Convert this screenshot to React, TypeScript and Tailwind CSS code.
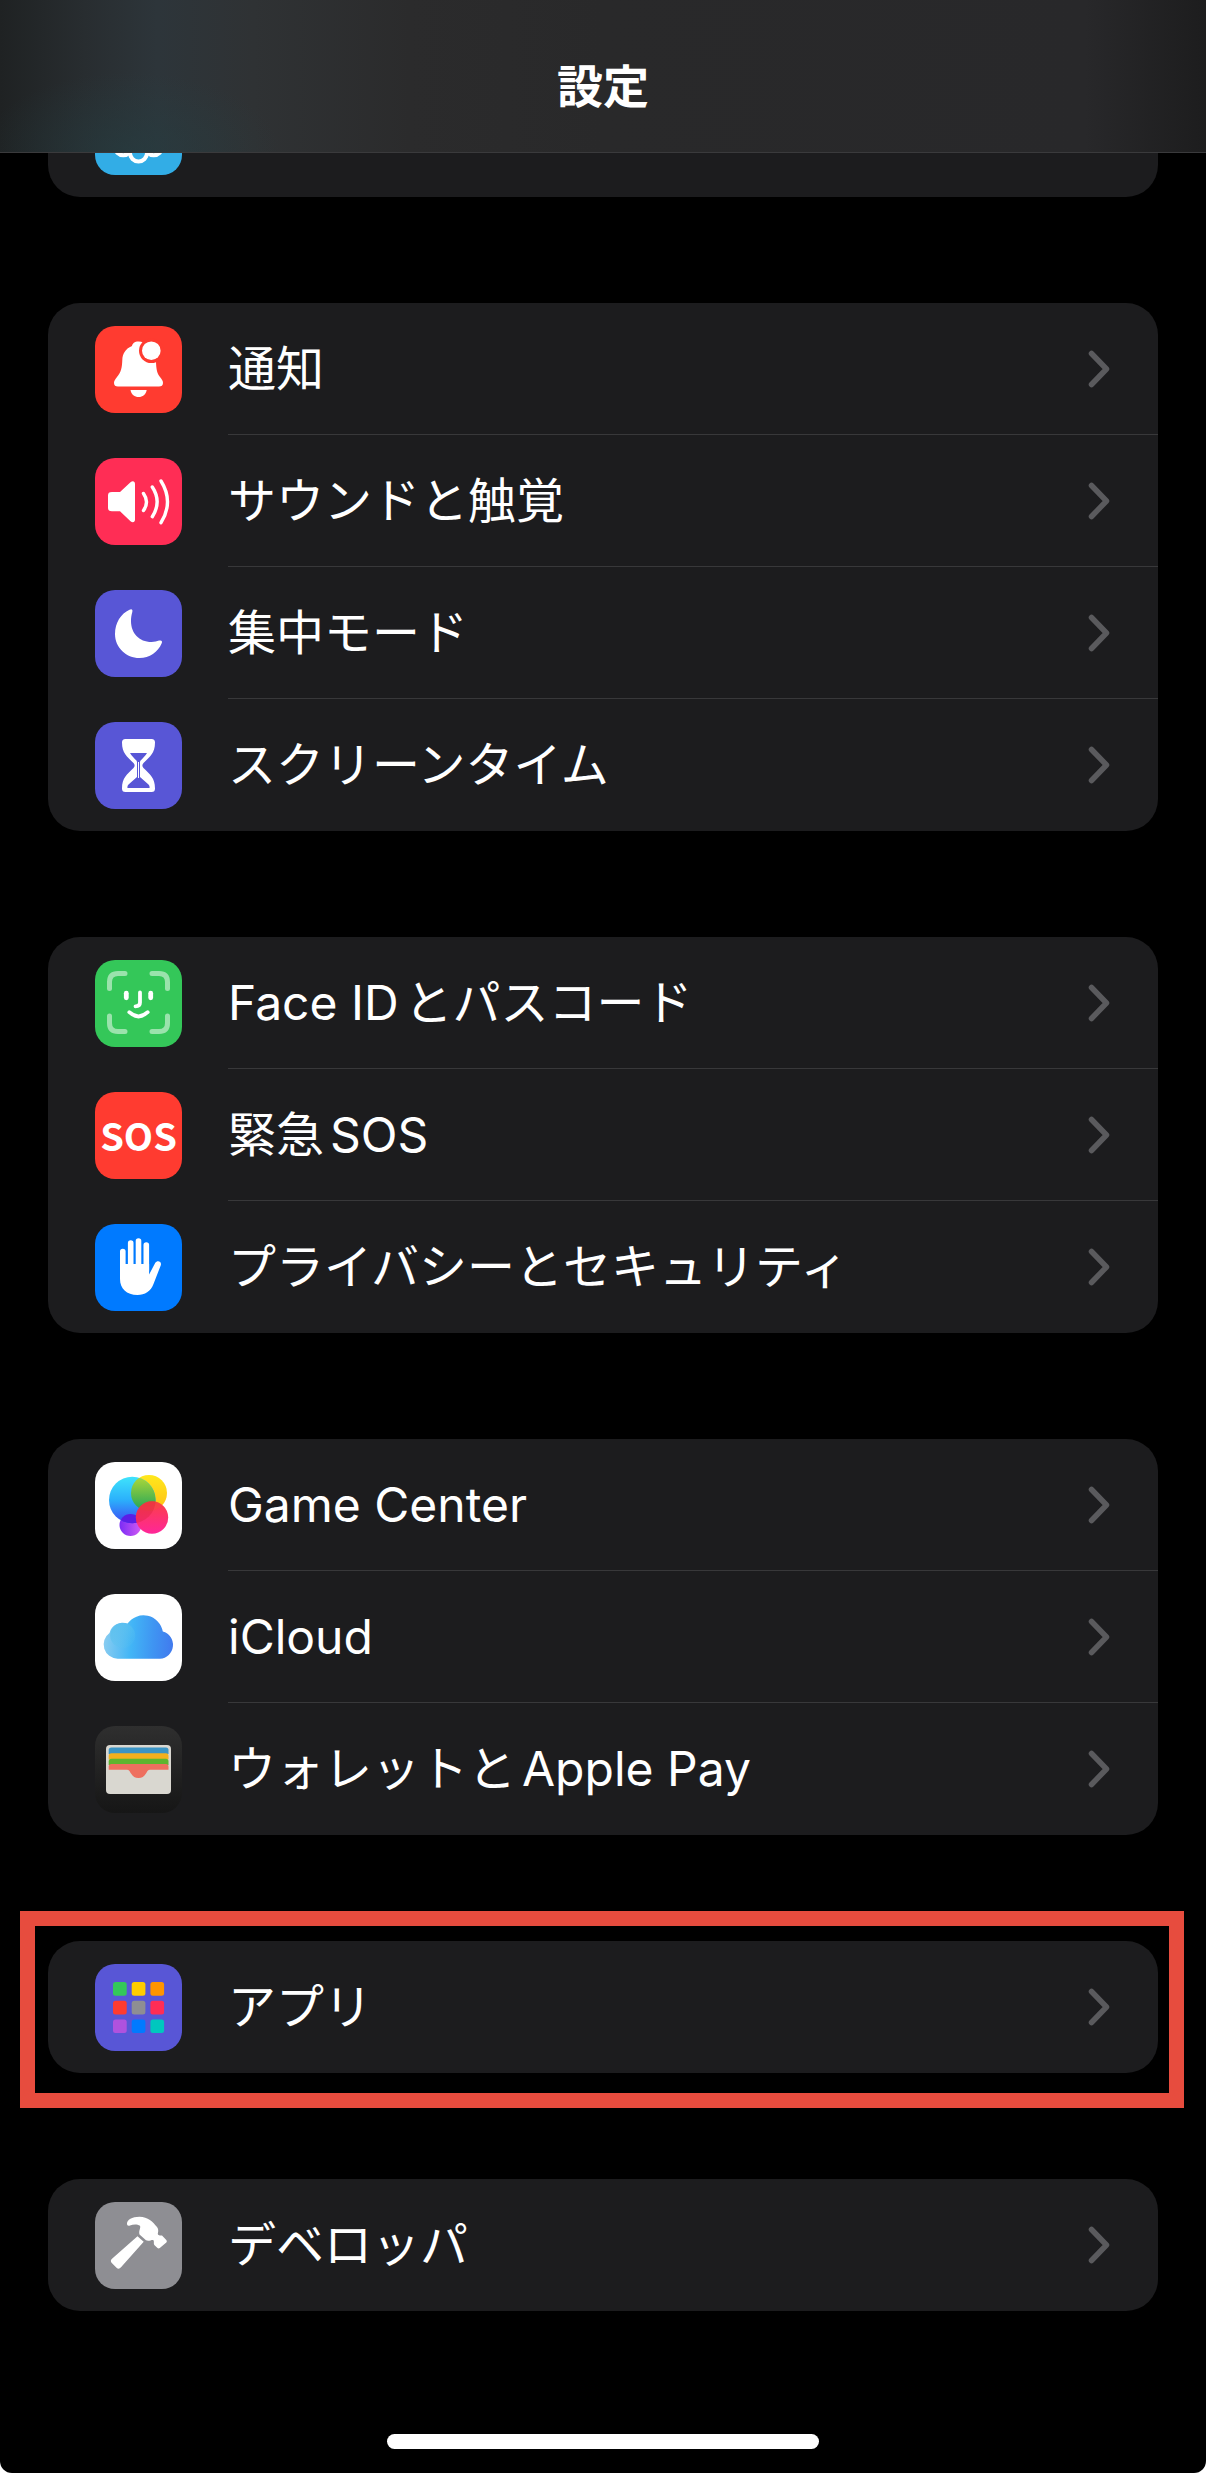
import React from 'react';

interface Item {
  id: string;
  label: string;
  tile: string;
  icon: React.ReactNode;
}

const Glyph: React.FC<{ children: React.ReactNode }> = ({ children }) => (
  <svg viewBox="0 0 87 87" className="w-full h-full" fill="none" aria-hidden="true">
    {children}
  </svg>
);

const WallpaperIcon = () => (
  <Glyph>
    <g stroke="#fff" strokeWidth="4">
      {[0, 45, 90, 135, 180, 225, 270, 315].map((deg) => (
        <path key={deg} d="M36 54C35 59 34.5 62 35 65A8.5 8.5 0 0 0 52 65C52.5 62 52 59 51 54" transform={`rotate(${deg} 43.5 43.5)`} />
      ))}
    </g>
  </Glyph>
);

const BellIcon = () => (
  <Glyph>
    <path
      fill="#fff"
      d="M43.5 15.5C39.5 15.5 37.5 17.5 37 20C30 23 27.5 28 27.3 34C27 42 26 46.5 22 51C20 53.5 19 55 19 57C19 59.5 20.5 60.5 23 60.5H64C66.5 60.5 68 59.5 68 57C68 55 67 53.5 65 51C62.5 48 61 44 61 34C60.5 28 57 23 50 20C49.5 17 47.5 15.5 43.5 15.5Z"
    />
    <circle cx="56.3" cy="24.7" r="12.3" fill="#ff3b30" />
    <circle cx="56.3" cy="24.7" r="9.3" fill="#fff" />
    <path fill="#fff" d="M35.5 64H51.7C51 68.5 47.5 71 43.6 71C39.7 71 36.2 68.5 35.5 64Z" />
  </Glyph>
);

const SoundIcon = () => (
  <Glyph>
    <path
      fill="#fff"
      d="M17 34H25L35.5 24.3C37.5 22.5 40 23 40 26V61.5C40 64.5 37.5 65 35.5 63.2L25 53.3H17C14 53.3 13 52 13 49.5V37.5C13 35 14 34 17 34Z"
    />
    <g stroke="#fff" strokeWidth="3.4" strokeLinecap="round">
      <path d="M48.5 35.5Q54.5 44 48.5 52.5" />
      <path d="M57.3 29Q67 43.8 57.3 58.7" />
      <path d="M66 23Q79 43.8 66 64.7" />
    </g>
  </Glyph>
);

const MoonIcon = () => (
  <Glyph>
    <path
      fill="#fff"
      d="M34.5 19.8C36.5 18.6 38 19.6 37.3 22C36.3 25.5 36 28 36 31C36 43 44 52 56.5 52C59.5 52 62 51.3 64 50.6C66.5 49.9 67.6 51 66.7 53.2C63 62 54.5 68 44.5 68C31 68 20 57.5 20 44C20 33 26 23.5 34.5 19.8Z"
    />
  </Glyph>
);

const HourglassIcon = () => (
  <Glyph>
    <path
      fill="#fff"
      d="M30.5 17H56.5C59 17 60 18.5 60 20.5C60 31 55 34.5 48.5 41C47 42.6 47 44.5 48.5 46C55 52.5 60 56 60 66.5C60 69 59 70 56.5 70H30.5C28 70 27 69 27 66.5C27 56 32 52.5 38.5 46C40 44.5 40 42.6 38.5 41C32 34.5 27 31 27 20.5C27 18.5 28 17 30.5 17Z"
    />
    <path
      fill="#5856d6"
      d="M35 31H52C50.5 33.8 48 36 45.6 38.5C45 39.2 45 40 45 41V55L53.5 62.5C54.5 63.5 54.8 64.5 54.5 66H32.5C32.2 64.5 32.5 63.5 33.5 62.5L42 55V41C42 40 42 39.2 41.4 38.5C39 36 36.5 33.8 35 31Z"
    />
    <path stroke="#fff" strokeWidth="1" d="M43.5 40V56" />
  </Glyph>
);

const FaceIdIcon = () => (
  <Glyph>
    <g stroke="#fff" strokeOpacity="0.5" strokeWidth="5" strokeLinecap="round">
      <path d="M14.5 28.5V22Q14.5 13.5 23 13.5H30" />
      <path d="M57 13.5H64Q72.5 13.5 72.5 22V28.5" />
      <path d="M72.5 56V63Q72.5 71.5 64 71.5H57" />
      <path d="M30 71.5H23Q14.5 71.5 14.5 63V56" />
    </g>
    <g stroke="#fff" strokeWidth="3.8" strokeLinecap="round">
      <path strokeWidth="4.8" d="M31.3 33.2V37.8" />
      <path strokeWidth="4.8" d="M55.7 33.2V37.8" />
      <path d="M45 32.5V42.5Q45 46.3 40.5 46.3" />
      <path d="M34.3 52.2Q43.5 60.6 52.7 52.2" />
    </g>
  </Glyph>
);

const HandIcon = () => (
  <Glyph>
    <g stroke="#fff" strokeWidth="5.6" strokeLinecap="round">
      <path d="M27.8 27.5V46" />
      <path d="M35.7 19V46" />
      <path d="M43.5 17V46" />
      <path d="M51.3 21V46" />
    </g>
    <path
      fill="#fff"
      d="M25 40H54.1V50.5L60.3 38.8C62 35.8 67 37 65.8 41.2L58.5 60C55.5 67.5 50 71 42.5 71C31.5 71 25 64.5 25 55Z"
    />
  </Glyph>
);

const GameCenterIcon = () => (
  <Glyph>
    <defs>
      <linearGradient id="gc-blue" x1="0" y1="0" x2="0" y2="1">
        <stop offset="0" stopColor="#3fe3fb" />
        <stop offset="0.5" stopColor="#2bb0fb" />
        <stop offset="1" stopColor="#3d4bf5" />
      </linearGradient>
      <linearGradient id="gc-yellow" x1="0" y1="0" x2="0" y2="1">
        <stop offset="0" stopColor="#ffe81c" />
        <stop offset="1" stopColor="#ffbf17" />
      </linearGradient>
      <linearGradient id="gc-green" x1="0" y1="0" x2="0" y2="1">
        <stop offset="0.1" stopColor="#a6d53a" />
        <stop offset="1" stopColor="#1fa35a" />
      </linearGradient>
      <linearGradient id="gc-pink" x1="0" y1="0" x2="0" y2="1">
        <stop offset="0" stopColor="#fb4046" />
        <stop offset="1" stopColor="#ff2699" />
      </linearGradient>
      <linearGradient id="gc-purple" x1="0" y1="0" x2="1" y2="0">
        <stop offset="0" stopColor="#7a2cf5" />
        <stop offset="1" stopColor="#d35bf3" />
      </linearGradient>
      <clipPath id="gc-blue-clip">
        <circle cx="37.3" cy="38" r="23.3" />
      </clipPath>
      <clipPath id="gc-pink-clip">
        <circle cx="57" cy="55.5" r="16.2" />
      </clipPath>
    </defs>
    <circle cx="35.5" cy="63" r="11" fill="url(#gc-purple)" />
    <circle cx="54" cy="31" r="18" fill="url(#gc-yellow)" />
    <circle cx="37.3" cy="38" r="23.3" fill="url(#gc-blue)" />
    <g clipPath="url(#gc-blue-clip)">
      <circle cx="54" cy="31" r="18" fill="url(#gc-green)" />
      <circle cx="35.5" cy="63" r="11" fill="#5a1ee6" />
    </g>
    <circle cx="57" cy="55.5" r="16.2" fill="url(#gc-pink)" />
    <g clipPath="url(#gc-pink-clip)">
      <circle cx="54" cy="31" r="18" fill="#f0562f" fillOpacity="0.25" />
      <circle cx="37.3" cy="38" r="23.3" fill="#d8203c" fillOpacity="0.35" />
    </g>
  </Glyph>
);

const CloudIcon = () => (
  <Glyph>
    <defs>
      <linearGradient id="cloud" gradientUnits="userSpaceOnUse" x1="8" y1="45" x2="79" y2="50">
        <stop offset="0" stopColor="#8bcdf0" />
        <stop offset="0.4" stopColor="#42b5f6" />
        <stop offset="0.7" stopColor="#3f95f2" />
        <stop offset="1" stopColor="#4179ee" />
      </linearGradient>
      <linearGradient id="cloud-lobe" x1="0" y1="0" x2="1" y2="1">
        <stop offset="0" stopColor="#5cc1ee" />
        <stop offset="1" stopColor="#5cc1ee" stopOpacity="0" />
      </linearGradient>
    </defs>
    <path
      fill="url(#cloud)"
      d="M22.5 64.7A14.2 14.2 0 0 1 14.5 39A13.5 13.5 0 0 1 32.5 29.6A19.6 19.6 0 0 1 67.8 37.6A13.8 13.8 0 0 1 65 64.7Z"
    />
    <circle cx="27.7" cy="41.5" r="12.5" fill="url(#cloud-lobe)" />
  </Glyph>
);

const WalletIcon = () => (
  <Glyph>
    <rect x="11" y="19" width="65" height="49" rx="4" fill="#d9d7d0" />
    <path fill="#3b94c4" d="M13.7 28V24Q13.7 21.5 16.5 21.5H71Q73.5 21.5 73.5 24V28Z" />
    <path fill="#f2b01e" d="M13.7 33.5V30Q13.7 27.3 16.5 27.3H71Q73.5 27.3 73.5 30V33.5Z" />
    <path fill="#5eb52f" d="M13.7 39V35.5Q13.7 32.7 16.5 32.7H71Q73.5 32.7 73.5 35.5V39Z" />
    <path
      fill="#ee6f5f"
      d="M13.7 43.7V40.5Q13.7 38 16.5 38H71Q73.5 38 73.5 40.5V43.7H56C52.5 43.7 52.5 45 51 47.5C49 50.8 47 52 43.5 52C40 52 38 50.8 36 47.5C34.5 45 34.5 43.7 31 43.7Z"
    />
  </Glyph>
);

const APP_COLORS = ['#34c759', '#ffcc00', '#ff9500', '#ff3b30', '#8e8e93', '#ff2d55', '#af52de', '#007aff', '#00c7be'];

const AppsIcon = () => (
  <Glyph>
    {APP_COLORS.map((color, i) => (
      <rect key={color} x={18 + (i % 3) * 18.7} y={18 + Math.floor(i / 3) * 18.7} width="13.7" height="13.7" rx="2.5" fill={color} />
    ))}
  </Glyph>
);

const HammerIcon = () => (
  <Glyph>
    <path
      fill="#fff"
      d="M32 21.5C32 18 37 14.7 44.5 14.7C53 14.7 58 20 62 25C63.5 27 63.5 29 62.8 31.5C62.8 33.5 65 33.5 67 33.5L71.3 38C72 39 72 39.8 71.3 40.5L64.8 46C64 46.7 63 46.5 62.5 46L59.3 43C58.3 41.5 59.5 39.5 58.3 38C56.5 37.5 54 39.5 51 38.3L44.5 32.5C43.5 28 46 26.5 45 23.8C42 22 38 22.5 35 23.5C33 24 32 23.5 32 21.5Z"
    />
    <path fill="#fff" d="M42.5 34.2L48.7 39.8L26 65.3C24.5 67 23 67 21.5 65.7L16.8 61C15.5 59.5 15.5 58 17 56.7Z" />
  </Glyph>
);

const groups: Item[][] = [
  [{ id: 'wallpaper', label: '壁紙', tile: 'bg-[#32ade6]', icon: <WallpaperIcon /> }],
  [
    { id: 'notifications', label: '通知', tile: 'bg-[#ff3b30]', icon: <BellIcon /> },
    { id: 'sounds', label: 'サウンドと触覚', tile: 'bg-[#ff2d55]', icon: <SoundIcon /> },
    { id: 'focus', label: '集中モード', tile: 'bg-[#5856d6]', icon: <MoonIcon /> },
    { id: 'screen-time', label: 'スクリーンタイム', tile: 'bg-[#5856d6]', icon: <HourglassIcon /> },
  ],
  [
    { id: 'face-id', label: 'Face IDとパスコード', tile: 'bg-[#34c759]', icon: <FaceIdIcon /> },
    {
      id: 'sos',
      label: '緊急SOS',
      tile: 'bg-[#ff3b30]',
      icon: <span className="font-['Noto_Sans_CJK_JP',sans-serif] font-bold text-[38px] leading-none">SOS</span>,
    },
    { id: 'privacy', label: 'プライバシーとセキュリティ', tile: 'bg-[#007aff]', icon: <HandIcon /> },
  ],
  [
    { id: 'game-center', label: 'Game Center', tile: 'bg-white', icon: <GameCenterIcon /> },
    { id: 'icloud', label: 'iCloud', tile: 'bg-white', icon: <CloudIcon /> },
    { id: 'wallet', label: 'ウォレットとApple Pay', tile: 'bg-linear-to-b from-[#2f2f2f] to-[#161616]', icon: <WalletIcon /> },
  ],
  [{ id: 'apps', label: 'アプリ', tile: 'bg-[#5856d6]', icon: <AppsIcon /> }],
  [{ id: 'developer', label: 'デベロッパ', tile: 'bg-[#8e8e93]', icon: <HammerIcon /> }],
];

const Row: React.FC<{ item: Item }> = ({ item }) => (
  <li className="group">
    <a href={`#${item.id}`} className="flex items-center gap-[46px] pl-[47px]">
      <span className={`w-[87px] h-[87px] shrink-0 rounded-[20px] overflow-hidden flex items-center justify-center ${item.tile}`}>
        {item.icon}
      </span>
      <span className="flex-1 h-[132px] flex items-center justify-between pr-12 border-b border-[#38383a] group-last:border-transparent">
        <span className="text-[48px] leading-[64px] whitespace-nowrap [text-autospace:normal]">{item.label}</span>
        <svg viewBox="0 0 22 38" className="w-[22px] h-[38px]" fill="none" aria-hidden="true">
          <path d="M3.5 3.5L18.5 19L3.5 34.5" stroke="#5a5a5d" strokeWidth="5.5" strokeLinecap="round" strokeLinejoin="round" />
        </svg>
      </span>
    </a>
  </li>
);

const App: React.FC = () => {
  return (
    <div className="bg-white">
      <div lang="ja" className="bg-black text-white rounded-b-xl font-['Inter','Noto_Sans_CJK_JP',sans-serif]">
        {/* Title bar, the list scrolls under it */}
        <header className="sticky top-0 z-10 h-[153px] -mb-[88px] flex justify-center items-end pb-[34px] border-b border-[#3a3a3c] bg-[#29292a] bg-[radial-gradient(ellipse_150px_80px_at_130px_100%,rgba(36,64,68,0.5),transparent),linear-gradient(to_right,#1f2223_0%,#282d30_7%,#2d353a_13%,#2f3234_21%,#2b2b2c_34%,#29292a_50%,#28282a_90%,#1d1d1e_100%)]">
          <h1 className="text-[46px] leading-[64px] font-bold">設定</h1>
        </header>

        <main className="flex flex-col gap-[106px] px-12">
          {groups.map((items) => (
            <section key={items[0].id} className="relative">
              <ul className="bg-[#1c1c1e] rounded-[32px] overflow-hidden">
                {items.map((item) => (
                  <Row key={item.id} item={item} />
                ))}
              </ul>
              {/* Highlight frame */}
              {items[0].id === 'apps' && (
                <div className="absolute -top-[30px] -bottom-[35px] -left-7 -right-[26px] border-[15px] border-[#e74c3e] pointer-events-none" />
              )}
            </section>
          ))}
        </main>

        {/* Home indicator */}
        <footer className="flex justify-center pt-[123px] pb-6">
          <div className="w-[432px] h-[15px] rounded-full bg-white" />
        </footer>
      </div>
    </div>
  );
};

export default App;
